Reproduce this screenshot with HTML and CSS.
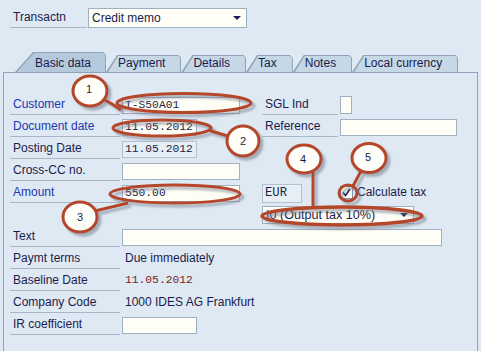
FILE: index.html
```html
<!DOCTYPE html>
<html>
<head>
<meta charset="utf-8">
<link rel="stylesheet" href="styles.css">
</head>
<body>
<div class="screen">
  <div class="trans-row">
    <div class="trans-lbl">Transactn</div>
    <div class="dd trans-dd"><span>Credit memo</span><span class="arrow"></span></div>
  </div>

  <div class="tabs">
    <div class="tab active">Basic data</div>
    <div class="tab">Payment</div>
    <div class="tab">Details</div>
    <div class="tab">Tax</div>
    <div class="tab">Notes</div>
    <div class="tab">Local currency</div>
  </div>

  <div class="panel">
    <div class="form">
      <div class="lbl req">Customer</div>
      <div class="fld w118 mono">I-S50A01</div>
      <div class="lbl">SGL Ind</div>
      <div class="fld sgl"></div>

      <div class="lbl req">Document date</div>
      <div class="fld w75 mono">11.05.2012</div>
      <div class="lbl">Reference</div>
      <div class="fld w117"></div>

      <div class="lbl">Posting Date</div>
      <div class="fld disp w75 mono">11.05.2012</div>
      <div class="empty span2"></div>

      <div class="lbl">Cross-CC no.</div>
      <div class="fld w118"></div>
      <div class="empty span2"></div>

      <div class="lbl req">Amount</div>
      <div class="fld w118 mono">550.00</div>
      <div class="fld disp eur mono">EUR</div>
      <div class="check-cell"><span class="checkbox"><svg width="11" height="11" viewBox="0 0 11 11"><path d="M2 5.5 L4.5 8.5 L9 2" fill="none" stroke="#1b1c4d" stroke-width="1.6"/></svg></span><span>Calculate tax</span></div>

      <div class="empty span2"></div>
      <div class="dd tax-dd"><span>I0 (Output tax 10%)</span><span class="arrow"></span></div>

      <div class="lbl">Text</div>
      <div class="fld text-fld"></div>

      <div class="lbl">Paymt terms</div>
      <div class="val">Due immediately</div>

      <div class="lbl">Baseline Date</div>
      <div class="val mono red">11.05.2012</div>

      <div class="lbl">Company Code</div>
      <div class="val">1000 IDES AG Frankfurt</div>

      <div class="lbl">IR coefficient</div>
      <div class="fld w75"></div>
    </div>
  </div>

  <svg class="annot" width="481" height="351" viewBox="0 0 481 351">
    <defs>
      <filter id="sh" x="-30%" y="-60%" width="160%" height="220%">
        <feDropShadow dx="3" dy="3" stdDeviation="1" flood-color="#6f7b8a" flood-opacity="0.55"/>
      </filter>
    </defs>
    <g filter="url(#sh)" stroke="#b4472a" fill="none" stroke-width="3">
      <ellipse cx="184" cy="103" rx="67" ry="9.5"/>
      <ellipse cx="162" cy="128" rx="49" ry="8"/>
      <ellipse cx="175" cy="194" rx="65" ry="9"/>
      <ellipse cx="342" cy="216" rx="80" ry="9" stroke-width="3.5"/>
      <ellipse cx="348" cy="193" rx="9" ry="8"/>
      <path d="M103,99 Q113,104 121,110"/>
      <path d="M208,130 L231,137"/>
      <path d="M95,211 L128,203"/>
      <path d="M313,171 L313,207"/>
      <path d="M361,171 L353,186"/>
      <ellipse cx="90" cy="91" rx="17" ry="15" fill="#fffef8"/>
      <ellipse cx="243" cy="141" rx="16" ry="15" fill="#fffef8"/>
      <ellipse cx="80" cy="217" rx="17" ry="15" fill="#fffef8"/>
      <ellipse cx="304" cy="159" rx="17" ry="14" fill="#fffef8"/>
      <ellipse cx="369" cy="158" rx="17" ry="14.5" fill="#fffef8"/>
    </g>
    <g class="nums">
      <text x="89" y="93">1</text>
      <text x="243" y="145">2</text>
      <text x="80" y="221">3</text>
      <text x="303" y="163">4</text>
      <text x="368" y="161">5</text>
    </g>
  </svg>
</div>
</body>
</html>
```

FILE: styles.css
```css
* { box-sizing: border-box; }
html, body { margin: 0; padding: 0; }
body {
  width: 481px;
  height: 351px;
  overflow: hidden;
  background: #dfe9f3;
  font-family: "Liberation Sans", Arial, sans-serif;
  font-size: 12px;
  color: #1b1c4d;
}
.screen {
  position: relative;
  width: 481px;
  height: 351px;
  padding-top: 8px;
}

/* transaction row */
.trans-row {
  display: flex;
  height: 20px;
  padding-left: 10px;
}
.trans-lbl {
  width: 77px;
  border-bottom: 1px solid #a9b6c5;
  padding-left: 3px;
  line-height: 18px;
}
.trans-dd {
  width: 159px;
  height: 20px;
  margin-left: 1px;
}

.dd {
  display: flex;
  align-items: center;
  justify-content: space-between;
  border: 1px solid #9fb0c3;
  background: #fffef6;
  padding: 0 5px 0 3px;
  line-height: 16px;
}
.arrow {
  width: 0;
  height: 0;
  border-left: 4px solid transparent;
  border-right: 4px solid transparent;
  border-top: 4px solid #1b1c4d;
}

/* tabs */
.tabs {
  display: flex;
  align-items: flex-end;
  height: 20px;
  margin-top: 24px;
  padding-left: 15px;
}
.tab {
  position: relative;
  z-index: 0;
  height: 17px;
  line-height: 17px;
  padding: 0 16px 0 12px;
  white-space: nowrap;
}
.tab::before,
.tab::after {
  content: "";
  position: absolute;
  z-index: -1;
}
.tab::before {
  inset: 0;
  background: #8ea3b9;
  clip-path: polygon(0 100%, 11px 0, calc(100% - 3px) 0, 100% 3px, 100% 100%);
}
.tab::after {
  inset: 1px 1px 0 2px;
  background: #c6d7e6;
  clip-path: polygon(0 100%, 10px 0, calc(100% - 2px) 0, 100% 2px, 100% 100%);
}
.tab.active {
  height: 20px;
  padding: 3px 15px 0 20px;
}
.tab.active::before {
  clip-path: polygon(0 100%, 18px 0, calc(100% - 3px) 0, 100% 3px, 100% 100%);
}
.tab.active::after {
  inset: 1px 1px 0 2px;
  background: #b5c9dd;
  clip-path: polygon(0 100%, 17px 0, calc(100% - 2px) 0, 100% 2px, 100% 100%);
}

/* panel */
.panel {
  margin-left: 3px;
  width: 475px;
  height: 279px;
  border: 1px solid #8ea3b9;
  border-bottom: 0;
  padding: 20px 0 0 6px;
}
.form {
  display: grid;
  grid-template-columns: 110px 138px 76px 136px;
  column-gap: 2px;
  grid-auto-rows: 22px;
}
.lbl {
  display: flex;
  align-items: flex-end;
  border-bottom: 1px solid #a9b6c5;
  padding: 0 0 2px 3px;
  line-height: 15px;
  white-space: nowrap;
}
.lbl.req { color: #2236b0; }
.empty.span2 { grid-column: span 2; }

.fld {
  align-self: end;
  justify-self: start;
  margin-bottom: 1px;
  height: 17px;
  border: 1px solid #9fb0c3;
  background: #fffef6;
  padding-left: 2px;
  line-height: 15px;
  white-space: nowrap;
}
.fld.disp {
  background: #e6eef6;
  border-color: #b3c0ce;
}
.w75 { width: 75px; }
.w117 { width: 117px; }
.w118 { width: 118px; }
.sgl { width: 12px; height: 18px; }
.text-fld { grid-column: span 3; width: 320px; }

.mono {
  font-family: "Liberation Mono", "Courier New", monospace;
  font-size: 11.3px;
  color: #221c44;
}
.fld.eur {
  width: 40px;
  height: 19px;
  margin-bottom: 0;
  line-height: 17px;
  font-size: 12.2px;
}
.red { color: #7b2222; }

.val {
  grid-column: span 3;
  align-self: end;
  padding: 0 0 3px 3px;
  line-height: 15px;
  white-space: nowrap;
}

.check-cell {
  display: flex;
  align-items: flex-end;
  gap: 4px;
  padding-bottom: 3px;
  line-height: 15px;
  white-space: nowrap;
}
.checkbox {
  width: 13px;
  height: 13px;
  border: 1px solid #7f93a9;
  background: #fffef6;
  display: flex;
  align-items: center;
  justify-content: center;
  margin-bottom: 1px;
}
.tax-dd {
  grid-column: 3 / span 2;
  align-self: end;
  justify-self: start;
  width: 152px;
  height: 18px;
  margin-bottom: 1px;
  font-size: 12.6px;
}

/* annotations */
.annot {
  position: absolute;
  left: 0;
  top: 0;
  pointer-events: none;
}
.nums text {
  font-family: "Liberation Sans", Arial, sans-serif;
  font-size: 11px;
  fill: #1b1c3a;
  text-anchor: middle;
}
```
